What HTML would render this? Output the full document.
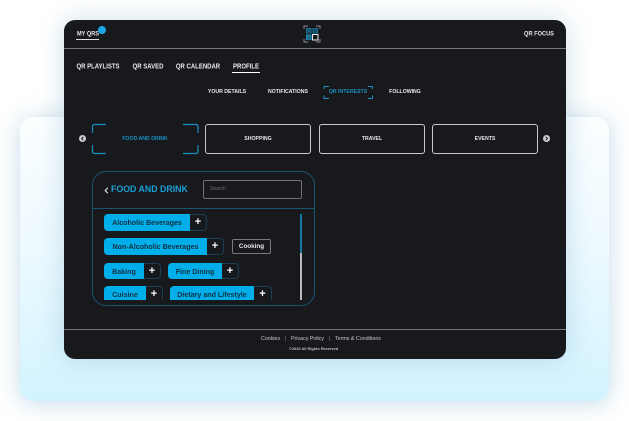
<!DOCTYPE html>
<html><head><meta charset="utf-8">
<style>
html,body{margin:0;padding:0;width:629px;height:421px;overflow:hidden;background:#fff}
body{position:relative;font-family:"Liberation Sans",sans-serif;filter:blur(.3px)}
div,span{position:absolute;box-sizing:border-box;white-space:nowrap}
.card{left:20px;top:117px;width:589px;height:284px;border-radius:14px;background:linear-gradient(180deg,#fbfeff 0%,#eefaff 45%,#d2f3ff 100%);box-shadow:0 2px 24px rgba(110,170,200,.42)}
.panel{left:64px;top:20px;width:502px;height:339px;border-radius:11px;background:#17191d;overflow:hidden;box-shadow:0 0 26px rgba(120,170,195,.38)}
.line{left:64px;width:502px;height:1px;background:#77797b}
.t{color:#e8e8e8;font-weight:700;transform:translate(-50%,-50%)}
.n{font-size:7.4px;transform:translate(-50%,-50%) scaleX(.81)}
.s{font-size:5.2px}
.tile{top:124px;width:106px;height:30px;border:1px solid #c8c8c8;border-radius:3px}
.tag{height:16.500px;background:#00aeea;color:#12303f;font-size:7.100px;font-weight:700;border-radius:4px 0 0 4px;line-height:18px;text-align:center}
.plus{height:16.500px;border:1px solid #1c4053;border-left:0;border-radius:0 4px 4px 0;color:#fff;font-size:11px;font-weight:700;line-height:15.500px;text-align:center}
</style></head>
<body>
<div class="card"></div>
<div class="panel"></div>
<div class="line" style="top:48px"></div>
<div class="line" style="top:329px"></div>

<div class="t" style="left:87.500px;top:34px;font-size:6.400px;transform:translate(-50%,-50%) scaleX(.88)">MY QRS</div>
<div style="left:76px;top:39px;width:23px;height:1px;background:#ddd"></div>
<div style="left:98px;top:26px;width:8px;height:8px;border-radius:50%;background:#1ea7e6"></div>

<svg style="position:absolute;left:303px;top:25px" width="18" height="18" viewBox="0 0 18 18" fill="none">
<path d="M1 4V1H5M13 1H17V4M17 14V17H13M5 17H1V14" stroke="#8a8d90" stroke-width="1"/>
<rect x="3" y="3" width="5.500" height="5.500" fill="#1a6f94"/><rect x="9.500" y="3" width="5.500" height="5.500" fill="#1a6f94"/>
<rect x="3" y="9.500" width="5.500" height="5.500" fill="#1f8ab5"/><rect x="9.500" y="9.500" width="5.500" height="5.500" stroke="#e8e8e8" stroke-width="1"/>
<text x="5.750" y="7.800" font-size="5" text-anchor="middle" fill="#17191d" font-family="Liberation Sans">Q</text>
<text x="12.250" y="7.800" font-size="5" text-anchor="middle" fill="#17191d" font-family="Liberation Sans">R</text>
<text x="5.750" y="14.300" font-size="5" text-anchor="middle" fill="#17191d" font-family="Liberation Sans">S</text>
</svg>

<div class="t" style="left:539px;top:34px;font-size:6.600px;transform:translate(-50%,-50%) scaleX(.86)">QR FOCUS</div>

<div class="t n" style="left:98px;top:66px">QR PLAYLISTS</div>
<div class="t n" style="left:148px;top:66px">QR SAVED</div>
<div class="t n" style="left:198px;top:66px">QR CALENDAR</div>
<div class="t n" style="left:245.500px;top:66px">PROFILE</div>
<div style="left:232px;top:72px;width:28px;height:1px;background:#fff"></div>

<div class="t s" style="left:227px;top:92px">YOUR DETAILS</div>
<div class="t s" style="left:288px;top:92px">NOTIFICATIONS</div>
<div class="t s" style="left:348px;top:92px;color:#1b8fc0">QR INTERESTS</div>
<div class="t s" style="left:405px;top:92px">FOLLOWING</div>
<svg style="position:absolute;left:323px;top:85px" width="51" height="15" viewBox="0 0 51 15" fill="none" stroke="#1b8fc0" stroke-width="1"><path d="M1 4V1.500H6M45 1.500H49.500V4M49.500 10.500V13.500H45M6 13.500H1V10.500"/></svg>

<svg style="position:absolute;left:91px;top:123px" width="108" height="32" viewBox="0 0 108 32" fill="none" stroke="#1b8fc0" stroke-width="1.200"><path d="M1.500 10V3.500Q1.500 1.500 3.500 1.500H15M92 1.500H105Q107 1.500 107 3.500V10M107 22V28.500Q107 30.500 105 30.500H92M15 30.500H3.500Q1.500 30.500 1.500 28.500V22"/></svg>
<div class="t s" style="left:145px;top:139px;color:#1b8fc0">FOOD AND DRINK</div>

<div class="tile" style="left:205px"></div><div class="t s" style="left:258px;top:139px">SHOPPING</div>
<div class="tile" style="left:319px"></div><div class="t s" style="left:372px;top:139px">TRAVEL</div>
<div class="tile" style="left:432px"></div><div class="t s" style="left:485px;top:139px">EVENTS</div>

<svg style="position:absolute;left:79px;top:135px" width="7" height="7" viewBox="0 0 7 7"><circle cx="3.500" cy="3.500" r="3.500" fill="#cfcfcf"/><path d="M4.300 1.800L2.600 3.500L4.300 5.200" stroke="#17191d" stroke-width="1" fill="none"/></svg>
<svg style="position:absolute;left:543px;top:135px" width="7" height="7" viewBox="0 0 7 7"><circle cx="3.500" cy="3.500" r="3.500" fill="#cfcfcf"/><path d="M2.700 1.800L4.400 3.500L2.700 5.200" stroke="#17191d" stroke-width="1" fill="none"/></svg>

<div style="left:92px;top:171px;width:223px;height:135px;border:1px solid #1a566f;border-radius:14px"></div>
<div style="left:92px;top:208px;width:223px;height:1px;background:#1a566f"></div>
<svg style="position:absolute;left:104px;top:187px" width="5" height="7" viewBox="0 0 5 7"><path d="M3.800 .8L1.200 3.500L3.800 6.200" stroke="#e8e8e8" stroke-width="1.100" fill="none"/></svg>
<div style="left:111px;top:183px;font-size:8.800px;font-weight:700;color:#1b9fd6;line-height:13px">FOOD AND DRINK</div>
<div style="left:203px;top:180px;width:99px;height:19px;border:1px solid #6f7174;border-radius:2px"></div>
<div style="left:210px;top:186px;font-size:5px;color:#6d6f72;line-height:7px">Search</div>

<div class="tag" style="left:104px;top:214px;width:86px">Alcoholic Beverages</div><div class="plus" style="left:190px;top:214px;width:17px">+</div>
<div class="tag" style="left:104px;top:238px;width:103px">Non-Alcoholic Beverages</div><div class="plus" style="left:207px;top:238px;width:17px">+</div>
<div style="left:232px;top:239px;width:39px;height:15px;border:1px solid #77797b;border-radius:2px;color:#e8e8e8;font-size:6.300px;font-weight:700;line-height:13px;text-align:center">Cooking</div>
<div class="tag" style="left:104px;top:262.500px;width:40px">Baking</div><div class="plus" style="left:144px;top:262.500px;width:17px">+</div>
<div class="tag" style="left:168px;top:262.500px;width:54px">Fine Dining</div><div class="plus" style="left:222px;top:262.500px;width:17px">+</div>
<div style="left:104px;top:286px;width:190px;height:14px;overflow:hidden">
<div class="tag" style="left:0;top:0;width:42px">Cuisine</div><div class="plus" style="left:42px;top:0;width:17px;height:20px">+</div>
<div class="tag" style="left:66px;top:0;width:84px">Dietary and Lifestyle</div><div class="plus" style="left:150px;top:0;width:18px;height:20px">+</div>
</div>
<div style="left:300px;top:214px;width:2px;height:39px;background:#12789f"></div>
<div style="left:300px;top:253px;width:2px;height:47px;background:#b9babb"></div>

<div style="left:261px;top:335px;font-size:5.300px;color:#c9c9c9;line-height:8px">Cookies</div>
<div style="left:285px;top:335px;font-size:5.300px;color:#8a8a8a;line-height:8px">|</div>
<div style="left:291px;top:335px;font-size:5.300px;color:#c9c9c9;line-height:8px">Privacy Policy</div>
<div style="left:329px;top:335px;font-size:5.300px;color:#8a8a8a;line-height:8px">|</div>
<div style="left:335px;top:335px;font-size:5.300px;color:#c9c9c9;line-height:8px">Terms &amp; Conditions</div>
<div style="left:289px;top:345px;font-size:3.900px;font-weight:700;color:#bdbdbd;line-height:7px">©2026 All Rights Reserved</div>
</body></html>
